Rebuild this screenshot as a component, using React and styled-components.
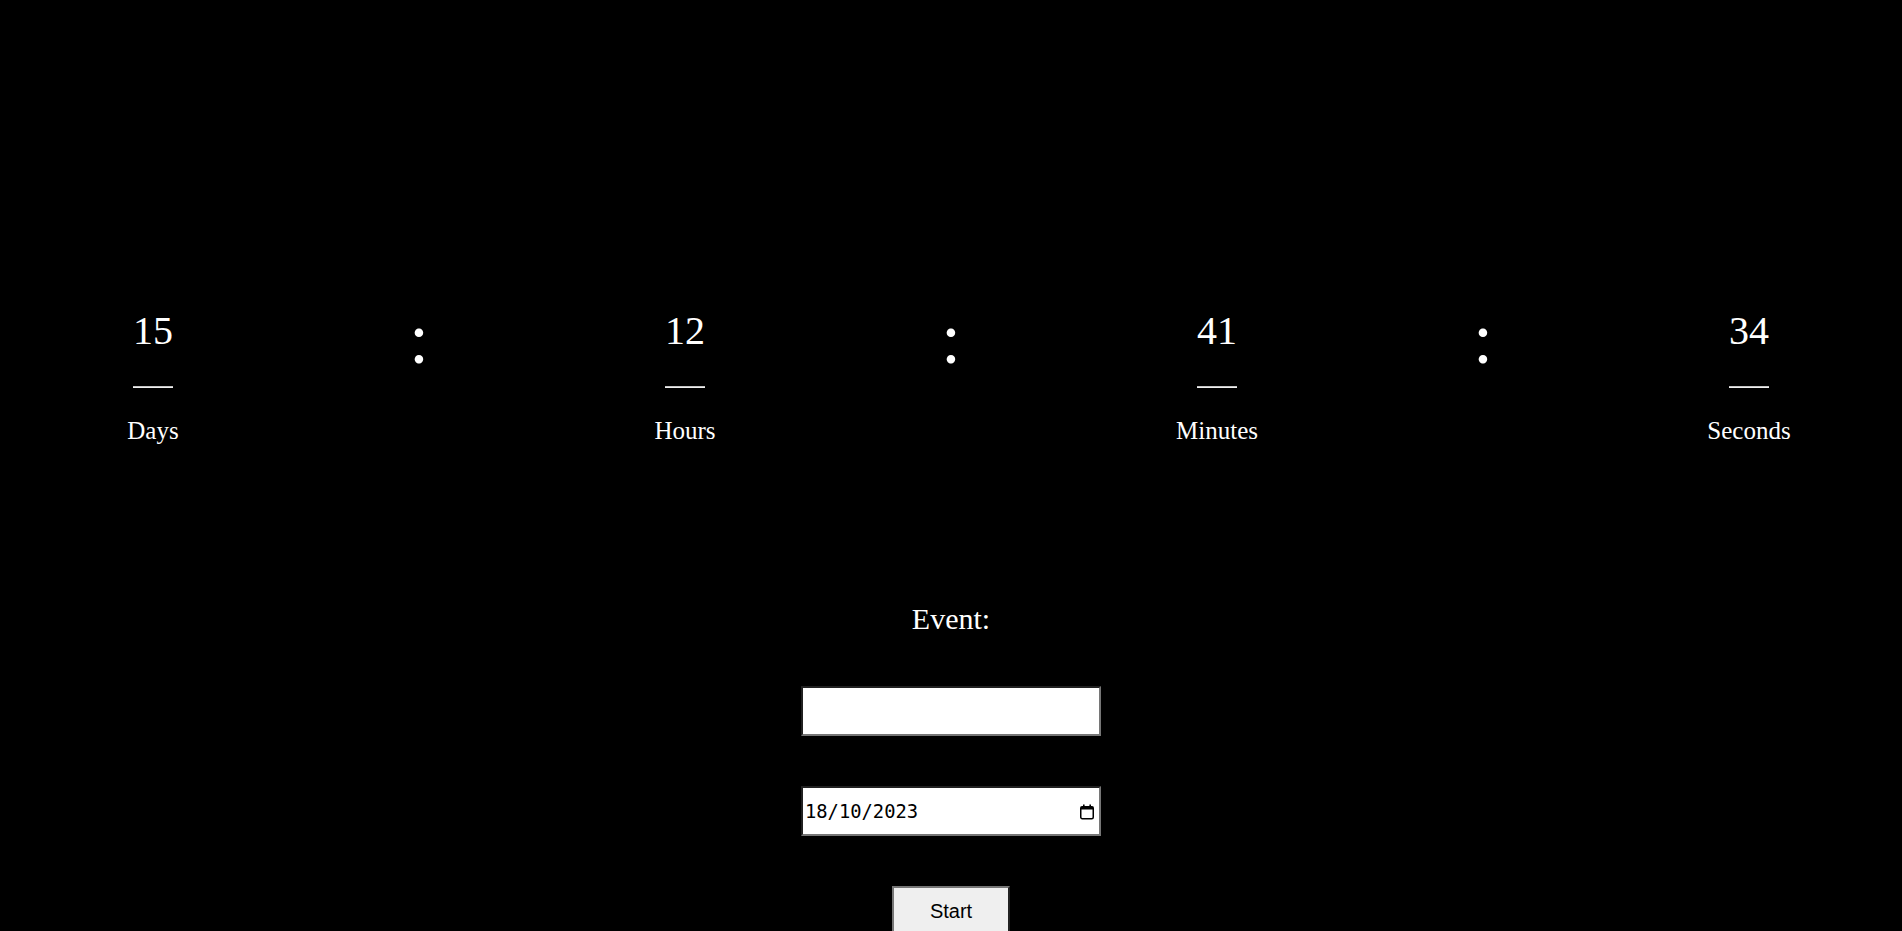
import React, { useState } from "react";
import styled, { createGlobalStyle } from "styled-components";

const GlobalStyle = createGlobalStyle`
  html, body {
    margin: 0;
    padding: 0;
    background: #000;
    color: #fff;
    font-family: "Liberation Serif", "Times New Roman", serif;
  }
`;

const Page = styled.main`
  display: flex;
  flex-direction: column;
  align-items: stretch;
  min-height: 931px;
`;

const Countdown = styled.section`
  display: grid;
  grid-template-columns: repeat(7, 1fr);
  padding: 307px 20px 0;
`;

const Unit = styled.div`
  display: flex;
  flex-direction: column;
  align-items: center;
`;

const Value = styled.span`
  font-size: 40px;
  line-height: normal;
`;

const Divider = styled.hr`
  width: 40px;
  height: 0;
  margin: 32px 0 29px;
  border: 0;
  border-top: 1px solid #c4c4c4;
  border-bottom: 1px solid #f0f0f0;
`;

const Label = styled.span`
  font-size: 25px;
  line-height: normal;
`;

const Colon = styled.span`
  font-size: 72px;
  line-height: 64px;
  text-align: center;
`;

const Form = styled.form`
  display: flex;
  flex-direction: column;
  align-items: center;
  margin-top: 157px;
`;

const EventLabel = styled.label`
  font-size: 30px;
  line-height: normal;
`;

const Box = styled.div`
  box-sizing: border-box;
  width: 300px;
  height: 50px;
  margin-top: ${(p) => p.$gap}px;
  display: flex;
  align-items: center;
  gap: 4px;
  padding: 0 4px 0 1px;
  background: #fff;
  color: #000;
  border: 2px inset #767676;
`;

const TextField = styled.input`
  flex: 1;
  min-width: 0;
  height: 100%;
  box-sizing: border-box;
  margin: 0;
  padding: 0 1px;
  border: 0;
  outline: none;
  background: transparent;
  color: #000;
  font-family: ${(p) => (p.$mono ? '"DejaVu Sans Mono", monospace' : '"Liberation Sans", Arial, sans-serif')};
  font-size: ${(p) => (p.$mono ? "18.8px" : "16px")};
`;

const CalendarIcon = styled.svg`
  flex: none;
  width: 16px;
  height: 17px;
  color: #000;
`;

const StartButton = styled.button`
  box-sizing: border-box;
  width: 118px;
  height: 50px;
  margin-top: 50px;
  background: #efefef;
  color: #000;
  border: 2px outset #767676;
  font-family: "Liberation Sans", Arial, sans-serif;
  font-size: 20px;
`;

const units = [
  { value: "15", label: "Days" },
  { value: "12", label: "Hours" },
  { value: "41", label: "Minutes" },
  { value: "34", label: "Seconds" },
];

export default function App() {
  const [name, setName] = useState("");
  const [date, setDate] = useState("18/10/2023");
  return (
    <Page>
      <GlobalStyle />
      <Countdown>
        {units.map((u, i) => (
          <React.Fragment key={u.label}>
            {i > 0 && <Colon>:</Colon>}
            <Unit>
              <Value>{u.value}</Value>
              <Divider />
              <Label>{u.label}</Label>
            </Unit>
          </React.Fragment>
        ))}
      </Countdown>
      <Form onSubmit={(e) => e.preventDefault()}>
        <EventLabel htmlFor="event">Event:</EventLabel>
        <Box $gap={50}>
          <TextField id="event" type="text" value={name} onChange={(e) => setName(e.target.value)} />
        </Box>
        <Box $gap={50}>
          <TextField type="text" $mono value={date} onChange={(e) => setDate(e.target.value)} />
          <CalendarIcon viewBox="0 0 16 17" aria-hidden="true">
            <rect x="1.75" y="3.75" width="12.5" height="12" rx="1.5" fill="none" stroke="currentColor" strokeWidth="1.5" />
            <rect x="1.75" y="3.75" width="12.5" height="2.75" fill="currentColor" />
            <rect x="4" y="1.5" width="1.6" height="3" fill="currentColor" />
            <rect x="10.4" y="1.5" width="1.6" height="3" fill="currentColor" />
          </CalendarIcon>
        </Box>
        <StartButton type="submit">Start</StartButton>
      </Form>
    </Page>
  );
}
